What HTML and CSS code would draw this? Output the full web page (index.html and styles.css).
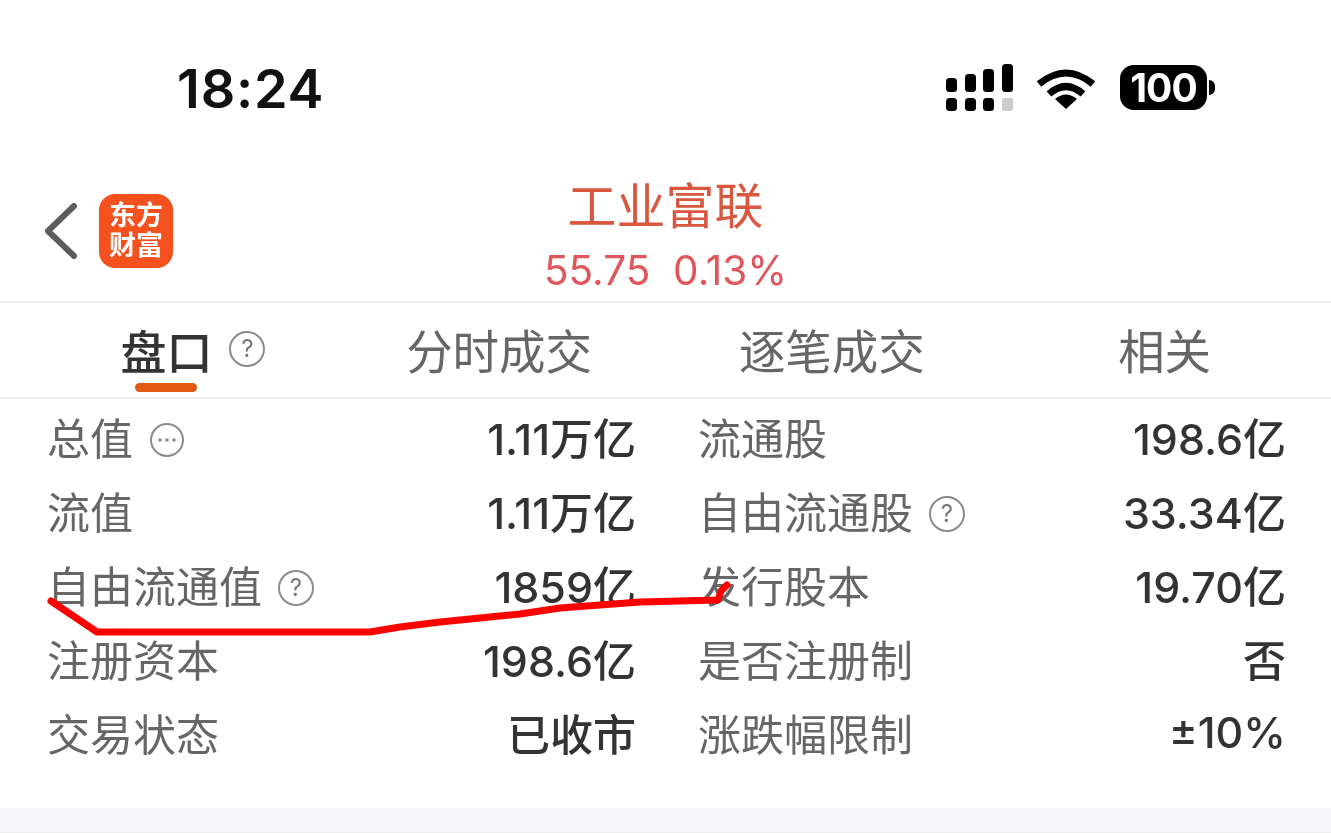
FILE: index.html
```html
<!DOCTYPE html>
<html lang="zh-CN">
<head>
  <meta charset="UTF-8" />
  <meta name="viewport" content="width=device-width, initial-scale=1.0"/>
  <title>工业富联 盘口</title>
  <link rel="stylesheet" href="styles.css">
</head>
<body>

<div class="page">
  <!-- 状态栏 -->
  <div class="status-bar">
    <div class="time">18:24</div>
    <div class="status-icons">
      <svg class="signal" width="68" height="48" viewBox="0 0 68 48">
        <rect x="0" y="14" width="11" height="14" rx="3.5"/>
        <rect x="19" y="10" width="11" height="18" rx="3.5"/>
        <rect x="37" y="5" width="11" height="23" rx="3.5"/>
        <rect x="56" y="0" width="11" height="28" rx="3.5"/>
        <rect x="0" y="34" width="11" height="13" rx="3.5"/>
        <rect x="19" y="34" width="11" height="13" rx="3.5"/>
        <rect x="37" y="34" width="11" height="13" rx="3.5"/>
        <rect x="56" y="34" width="11" height="13" rx="2" fill="#ccc"/>
      </svg>
      <svg class="wifi" width="60" height="44" viewBox="0 0 60 44">
        <path d="M3 18 Q30 -4 57 18" fill="none" stroke="#000" stroke-width="7"/>
        <path d="M13 28 Q30 13 47 28" fill="none" stroke="#000" stroke-width="7"/>
        <path d="M30 43 L19 33 Q30 24 41 33 Z"/>
      </svg>
      <div class="battery">
        <div class="battery-body">100</div>
        <div class="battery-nub"></div>
      </div>
    </div>
  </div>

  <!-- 标题 -->
  <div class="header">
    <div class="header-left">
      <svg class="back" width="34" height="56" viewBox="0 0 34 56">
        <path d="M29 3 L3 28 L29 53" fill="none" stroke="#5c5c5c" stroke-width="6" stroke-linecap="round" stroke-linejoin="round"/>
      </svg>
      <div class="logo">东方<br>财富</div>
    </div>
    <div class="header-title">
      <div class="stock-name">工业富联</div>
      <div class="stock-price">55.75&nbsp;&nbsp;0.13%</div>
    </div>
  </div>

  <!-- 标签 -->
  <div class="tabs">
    <div class="tab active">
      <span class="tab-label">盘口</span>
      <span class="hint tab-hint">?</span>
    </div>
    <div class="tab">分时成交</div>
    <div class="tab">逐笔成交</div>
    <div class="tab">相关</div>
  </div>

  <!-- 盘口数据 -->
  <div class="quote-grid">
    <div class="row">
      <div class="name">总值
        <svg class="more" width="36" height="36" viewBox="0 0 36 36">
          <circle cx="18" cy="18" r="16" fill="none" stroke="#8a8a8a" stroke-width="2"/>
          <circle cx="11" cy="18" r="1.8" fill="#8a8a8a"/>
          <circle cx="18" cy="18" r="1.8" fill="#8a8a8a"/>
          <circle cx="25" cy="18" r="1.8" fill="#8a8a8a"/>
        </svg>
      </div>
      <div class="value">1.11万亿</div>
    </div>
    <div class="row"><div class="name">流通股</div><div class="value">198.6亿</div></div>

    <div class="row"><div class="name">流值</div><div class="value">1.11万亿</div></div>
    <div class="row"><div class="name">自由流通股 <span class="hint">?</span></div><div class="value">33.34亿</div></div>

    <div class="row"><div class="name">自由流通值 <span class="hint">?</span></div><div class="value">1859亿</div></div>
    <div class="row"><div class="name">发行股本</div><div class="value">19.70亿</div></div>

    <div class="row"><div class="name">注册资本</div><div class="value">198.6亿</div></div>
    <div class="row"><div class="name">是否注册制</div><div class="value">否</div></div>

    <div class="row"><div class="name">交易状态</div><div class="value">已收市</div></div>
    <div class="row"><div class="name">涨跌幅限制</div><div class="value">±10%</div></div>
  </div>

  <div class="bottom-band"></div>

  <!-- 手绘红线 -->
  <svg class="scribble" width="1331" height="833" viewBox="0 0 1331 833">
    <path d="M51 601 L97 632 L370 632 L400 627 L440 622 L480 618 L520 614 L560 608 L600 605 L640 602 L718 600 L721 591 L727 585" fill="none" stroke="#f00" stroke-width="7" stroke-linecap="round" stroke-linejoin="round"/>
  </svg>
</div>

</body>
</html>
```

FILE: styles.css
```css
html, body {
  margin: 0;
  height: 100%;
  overflow: hidden;
  background-color: #fff;
}
.page {
  position: relative;
  width: 1331px;
  height: 833px;
  display: flex;
  flex-direction: column;
  font-family: Inter, "Noto Sans CJK SC", sans-serif;
  color: #333;
  filter: blur(0.6px);
}
.status-bar {
  height: 176px;
  flex: none;
  display: flex;
  justify-content: space-between;
  align-items: center;
  box-sizing: border-box;
  padding: 0 116px 0 177px;
}
.time {
  font-size: 54px;
  font-weight: 600;
  letter-spacing: 0.8px;
  color: #111;
}
.status-icons {
  display: flex;
  align-items: center;
  gap: 24px;
}
.signal {
  fill: #000;
  margin-right: -2px;
}
.wifi {
  fill: #000;
}
.battery {
  display: flex;
  align-items: center;
  gap: 2px;
  margin-top: -2px;
}
.battery-body {
  width: 87px;
  height: 45px;
  border-radius: 14px;
  background-color: #000;
  color: #fff;
  font-size: 39px;
  font-weight: 700;
  line-height: 45px;
  text-align: center;
  letter-spacing: -1px;
}
.battery-nub {
  width: 6px;
  height: 15px;
  border-radius: 0 6px 6px 0;
  background-color: #000;
}
.header {
  height: 127px;
  flex: none;
  display: grid;
  grid-template-columns: 1fr auto 1fr;
  align-items: center;
  box-sizing: border-box;
  padding-left: 45px;
  border-bottom: 2px solid #eee;
}
.header-left {
  display: flex;
  align-items: center;
  gap: 20px;
  margin-top: -16px;
}
.logo {
  width: 74px;
  height: 74px;
  border-radius: 16px;
  background-color: #f4511e;
  color: #fff;
  font-size: 27px;
  font-weight: 700;
  line-height: 30px;
  text-align: center;
  box-sizing: border-box;
  padding-top: 7px;
}
.header-title {
  text-align: center;
  margin-left: -45px;
  margin-top: -5px;
}
.stock-name {
  font-size: 49px;
  line-height: 62px;
  color: #d9573f;
}
.stock-price {
  font-size: 40.5px;
  line-height: 50px;
  margin-top: 8px;
  color: #e0565a;
}
.tabs {
  height: 96px;
  flex: none;
  display: grid;
  grid-template-columns: repeat(4, 1fr);
  box-sizing: border-box;
  border-bottom: 2px solid #eee;
}
.tab {
  display: flex;
  justify-content: center;
  align-items: center;
  font-size: 46.5px;
  color: #666;
  padding-bottom: 3px;
}
.tab.active {
  color: #333;
  font-weight: 500;
}
.tab-label {
  position: relative;
  font-size: 46px;
}
.tab-label::after {
  content: "";
  position: absolute;
  left: 15px;
  right: 15px;
  bottom: -10px;
  height: 9px;
  border-radius: 5px;
  background-color: #e25a10;
}
.tab-hint {
  margin-left: 17px;
  margin-right: -53px;
}
.hint {
  display: inline-block;
  width: 32px;
  height: 32px;
  border: 2px solid #8a8a8a;
  border-radius: 50%;
  color: #777;
  font-size: 24px;
  font-weight: 400;
  line-height: 32px;
  text-align: center;
  vertical-align: middle;
  font-family: Inter, sans-serif;
}
.quote-grid {
  flex: 1;
  display: grid;
  grid-template-columns: 589px 588px;
  grid-auto-rows: 74px;
  column-gap: 62px;
  box-sizing: border-box;
  padding: 0 45px 0 47px;
}
.row {
  display: flex;
  justify-content: space-between;
  align-items: center;
  font-size: 43px;
}
.name {
  color: #666;
  display: flex;
  align-items: center;
  gap: 16px;
}
.name .hint, .name .more {
  margin-top: 8px;
}
.value {
  color: #333;
  font-weight: 500;
}
.bottom-band {
  height: 24px;
  flex: none;
  background-color: #f7f7f9;
  border-bottom: 1px solid #eee;
}
.scribble {
  position: absolute;
  left: 0;
  top: 0;
  pointer-events: none;
}
```
